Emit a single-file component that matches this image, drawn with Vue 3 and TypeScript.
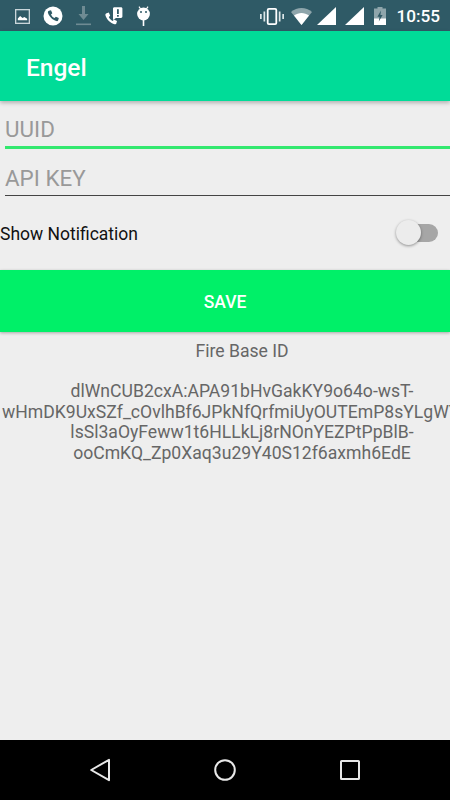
<script setup lang="ts">
import { ref } from "vue";

const uuid = ref<string>("");
const apiKey = ref<string>("");

const firebaseLines: string[] = [
  "dlWnCUB2cxA:APA91bHvGakKY9o64o-wsT-",
  "wHmDK9UxSZf_cOvlhBf6JPkNfQrfmiUyOUTEmP8sYLgWY",
  "lsSl3aOyFeww1t6HLLkLj8rNOnYEZPtPpBlB-",
  "ooCmKQ_Zp0Xaq3u29Y40S12f6axmh6EdE",
];
</script>

<template>
  <div class="screen">
    <div class="status-bar">
      <div class="status-left">
        <svg class="ic-image" width="15" height="15" viewBox="0 0 16 16">
          <rect x="0.7" y="0.7" width="14.6" height="14.6" fill="none" stroke="#c9d6da" stroke-width="1.4" />
          <path d="M3 12 L3 10 L5.5 7.5 L8 9.5 L10 8.5 L13 10.5 L13 12 Z" fill="#fff" />
        </svg>
        <svg class="ic-call" width="20" height="20" viewBox="0 0 20 20">
          <circle cx="10" cy="10" r="9.5" fill="#fff" />
          <path d="M6 4.8 L8 4.2 L9.3 7.2 L8 8.4 C8.6 9.9 10 11.4 11.6 12 L12.8 10.7 L15.8 12 L15.2 14.2 C15 15 14.2 15.3 13.4 15.1 C9.6 14.2 5.8 10.4 4.9 6.6 C4.7 5.8 5.2 5 6 4.8 Z" fill="#2f5a66" />
        </svg>
        <svg class="ic-download" width="15" height="20" viewBox="0 0 15 20">
          <path d="M6 0 H9 V8 H12.5 L7.5 14 L2.5 8 H6 Z" fill="#6f8b93" />
          <rect x="0" y="17.5" width="15" height="1.6" fill="#6f8b93" />
        </svg>
        <svg class="ic-missed" width="19" height="19" viewBox="0 0 19 19">
          <path d="M2.6 6.2 L4.8 5.6 L6.2 8.8 L4.8 10 C5.5 11.7 7 13.2 8.7 13.9 L10 12.6 L13 14 L12.4 16.2 C12.2 17 11.4 17.4 10.6 17.2 C6.4 16.2 2.6 12.4 1.4 8.2 C1.2 7.2 1.8 6.4 2.6 6.2 Z" fill="#fff" />
          <path d="M9 1.6 C9 0.8 9.6 0.2 10.4 0.2 H17 C17.8 0.2 18.4 0.8 18.4 1.6 V9.6 C18.4 10.4 17.8 11 17 11 H12 L9 13 Z" fill="#fff" />
          <rect x="13" y="2.2" width="1.8" height="4.8" fill="#2f5a66" />
          <rect x="13" y="8" width="1.8" height="1.7" fill="#2f5a66" />
        </svg>
        <svg class="ic-lollipop" width="15" height="20" viewBox="0 0 15 20">
          <path d="M3 0.6 L4.6 3 M12 0.6 L10.4 3" stroke="#fff" stroke-width="1.2" />
          <circle cx="7.5" cy="8" r="6.4" fill="#fff" />
          <circle cx="5" cy="6" r="1" fill="#2f5a66" />
          <circle cx="10" cy="6" r="1" fill="#2f5a66" />
          <rect x="6.7" y="13" width="1.6" height="7" fill="#fff" />
        </svg>
      </div>
      <div class="status-right">
        <svg class="ic-vibrate" width="24" height="17" viewBox="0 0 24 17">
          <rect x="7.7" y="0.9" width="8.6" height="15.2" rx="1.2" fill="none" stroke="#fff" stroke-width="1.8" />
          <path d="M3.5 3.5 H5.2 V13.5 H3.5 Z M0 6 H1.7 V11 H0 Z M18.8 3.5 H20.5 V13.5 H18.8 Z M22.3 6 H24 V11 H22.3 Z" fill="#dbe5e7" />
        </svg>
        <svg class="ic-wifi" width="21" height="17" viewBox="0 0 21 17">
          <path d="M0 4 C6 -1.2 15 -1.2 21 4 L10.5 17 Z" fill="#8ea5ab" />
          <path d="M3 7.6 C7.5 4 13.5 4 18 7.6 L10.5 17 Z" fill="#fff" />
        </svg>
        <svg class="ic-signal" width="20" height="18" viewBox="0 0 20 18">
          <path d="M0 18 L19 0 V18 Z" fill="#fff" />
        </svg>
        <svg class="ic-signal second" width="20" height="18" viewBox="0 0 20 18">
          <path d="M0 18 L19 0 V18 Z" fill="#fff" />
        </svg>
        <svg class="ic-battery" width="12" height="18" viewBox="0 0 12 18">
          <path d="M3.5 0 H8.5 V1.5 H12 V18 H0 V1.5 H3.5 Z" fill="#8ea5ab" />
          <path d="M0 11.5 H12 V18 H0 Z" fill="#fff" />
          <path d="M7 3.5 L3.4 9.8 H5.6 L4.8 14.5 L8.6 8 H6.4 Z" fill="#2f5a66" />
        </svg>
        <span class="clock">10:55</span>
      </div>
    </div>

    <header class="app-bar">Engel</header>

    <main class="content">
      <div class="fields">
        <input v-model="uuid" class="field focused" type="text" placeholder="UUID" />
        <input v-model="apiKey" class="field" type="text" placeholder="API KEY" />
      </div>

      <div class="notify-row">
        <span class="notify-label">Show Notification</span>
        <div class="switch">
          <span class="switch-thumb"></span>
        </div>
      </div>

      <button class="save-btn" type="button">SAVE</button>

      <!-- the text view is wider than the screen, so it gets cut on the right -->
      <div class="fb-block">
        <p class="fb-title">Fire Base ID</p>
        <div class="fb-value">
          <span v-for="line in firebaseLines" :key="line" class="fb-line">{{ line }}</span>
        </div>
      </div>
    </main>

    <nav class="nav-bar">
      <svg width="20" height="24" viewBox="0 0 20 24">
        <path d="M19 1.8 V22.2 L1.2 12 Z" fill="none" stroke="#e8e8e8" stroke-width="2" stroke-linejoin="round" />
      </svg>
      <svg width="22" height="22" viewBox="0 0 22 22">
        <circle cx="11" cy="11" r="9.8" fill="none" stroke="#e8e8e8" stroke-width="2" />
      </svg>
      <svg width="20" height="20" viewBox="0 0 20 20">
        <rect x="1" y="1" width="18" height="18" rx="0.6" fill="none" stroke="#e8e8e8" stroke-width="2" />
      </svg>
    </nav>
  </div>
</template>

<style>
html,
body {
  margin: 0;
  background: #eeeeee;
}
</style>

<style scoped>
.screen {
  width: 450px;
  height: 800px;
  display: flex;
  flex-direction: column;
  overflow: hidden;
  background: #eeeeee;
  font-family: Roboto, "Liberation Sans", sans-serif;
}

.status-bar {
  height: 31px;
  flex-shrink: 0;
  display: flex;
  justify-content: space-between;
  align-items: center;
  padding-top: 1px;
  box-sizing: border-box;
  background: #2f5a66;
  color: #fff;
}

.status-left {
  display: flex;
  align-items: center;
  padding-left: 15px;
}

.ic-call {
  margin-left: 13px;
}

.ic-download {
  margin-left: 13px;
}

.ic-missed {
  margin-left: 13px;
}

.ic-lollipop {
  margin-left: 13px;
}

.status-right {
  display: flex;
  align-items: center;
  padding-right: 10px;
}

.ic-wifi {
  margin-left: 7px;
}

.ic-signal {
  margin-left: 5px;
}

.ic-signal.second {
  margin-left: 8px;
}

.ic-battery {
  margin-left: 9px;
}

.clock {
  margin-left: 10px;
  font-size: 17.2px;
  font-weight: 500;
}

.app-bar {
  height: 70px;
  flex-shrink: 0;
  display: flex;
  align-items: center;
  padding: 3px 0 0 26px;
  box-sizing: border-box;
  background: #00dc98;
  color: #fff;
  font-size: 24.5px;
  font-weight: 500;
  box-shadow: 0 2px 4px rgba(0, 0, 0, 0.25);
  z-index: 1;
}

.content {
  flex: 1;
  min-height: 0;
}

.fields {
  display: flex;
  flex-direction: column;
  padding: 15px 0 0 5px;
}

.field {
  height: 26px;
  padding: 0 0 4px;
  border: 0;
  border-bottom: 1px solid #444444;
  outline: none;
  background: transparent;
  font-family: inherit;
  font-size: 22.4px;
  color: #333;
  box-sizing: content-box;
}

.field + .field {
  margin-top: 16px;
}

.field.focused {
  border-bottom: 3px solid #33e86f;
}

.field::placeholder {
  color: #999999;
  opacity: 1;
}

.notify-row {
  height: 74px;
  display: flex;
  justify-content: space-between;
  align-items: center;
  padding-right: 12px;
}

.notify-label {
  padding-top: 2px;
  font-size: 17.5px;
  color: #111111;
}

.switch {
  position: relative;
  width: 37px;
  height: 18px;
  border-radius: 9px;
  background: #a6a6a6;
}

.switch-thumb {
  position: absolute;
  left: -5px;
  top: -4px;
  width: 25px;
  height: 25px;
  border-radius: 50%;
  background: #ececec;
  box-shadow: 0 1px 3px rgba(0, 0, 0, 0.4);
}

.save-btn {
  display: block;
  width: 100%;
  height: 62px;
  border: 0;
  padding: 1px 0 0;
  background: #00f068;
  color: #fff;
  font-family: inherit;
  font-size: 17.5px;
  font-weight: 500;
  box-shadow: 0 1px 3px rgba(0, 0, 0, 0.3);
}

.fb-block {
  width: 482px;
  margin-left: 1px;
  color: #666666;
  font-size: 17.6px;
  text-align: center;
}

.fb-title {
  margin: 9px 0 0;
  line-height: 20px;
}

.fb-value {
  margin-top: 20px;
  line-height: 20.7px;
}

.fb-line {
  display: block;
  white-space: nowrap;
}

.fb-line:nth-child(2) {
  padding-left: 1px;
  text-align: left;
}

.nav-bar {
  height: 60px;
  flex-shrink: 0;
  display: flex;
  align-items: center;
  justify-content: center;
  gap: 104px;
  background: #000;
}
</style>
